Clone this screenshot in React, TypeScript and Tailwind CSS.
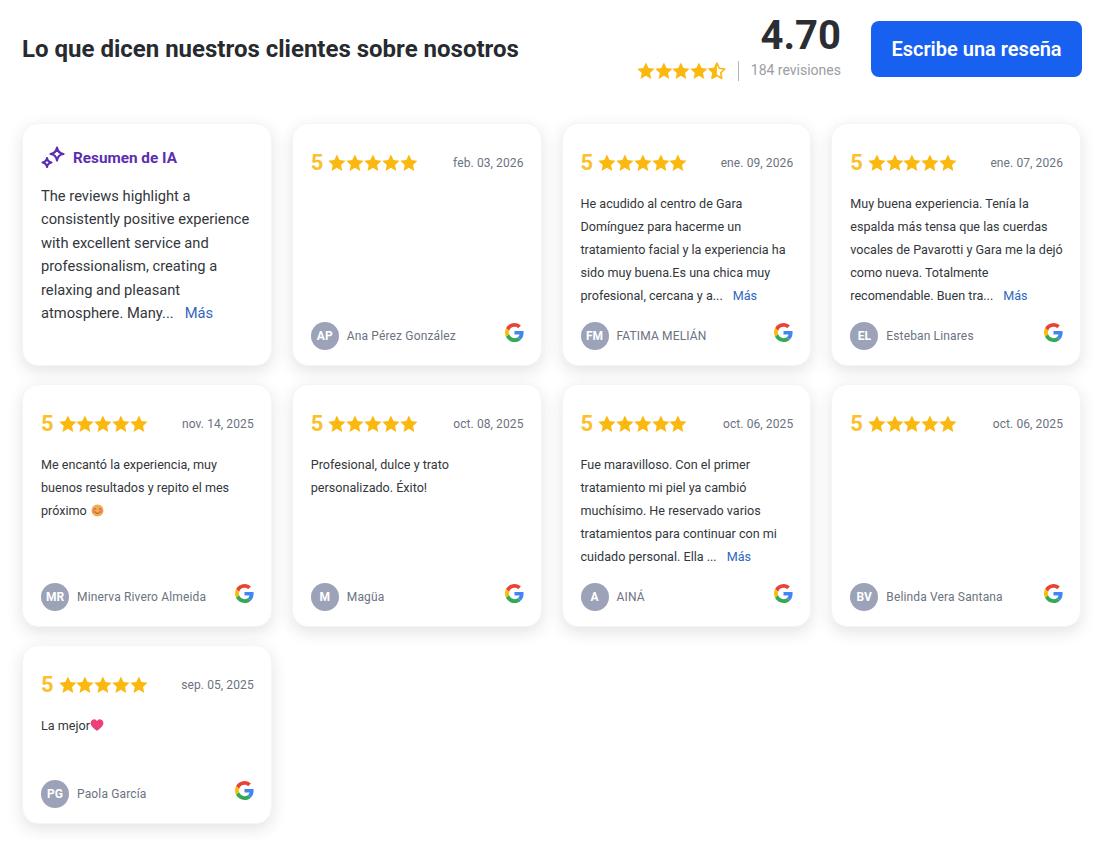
const STAR =
  'M12 1.6l3.2 6.9 7.5.9-5.6 5.1 1.5 7.4L12 18.1l-6.6 3.8 1.5-7.4-5.6-5.1 7.5-.9z'

const Star = () => (
  <svg viewBox="1 1 22 22" className="w-[17.8px] h-[17.8px] shrink-0" fill="#fbb80f">
    <path d={STAR} />
  </svg>
)

const HalfStar = () => (
  <svg viewBox="0 0 24 24" className="w-[17.8px] h-[17.8px] shrink-0">
    <path d="M12 1.6v16.5l-6.6 3.8 1.5-7.4-5.6-5.1 7.5-.9z" fill="#fbb80f" />
    <path d={STAR} fill="none" stroke="#fbb80f" strokeWidth="2.2" strokeLinejoin="round" />
  </svg>
)

const GoogleIcon = () => (
  <svg viewBox="0 0 48 48" className="w-[19px] h-[19px] shrink-0">
    <path
      fill="#EA4335"
      d="M24 9.5c3.5 0 6.7 1.2 9.2 3.6l6.9-6.9C35.9 2.4 30.5 0 24 0 14.6 0 6.5 5.4 2.6 13.2l8 6.2C12.4 13.7 17.7 9.5 24 9.5z"
    />
    <path
      fill="#4285F4"
      d="M47 24.5c0-1.6-.1-3.100-.4-4.500H24v9h12.900c-.6 3-2.200 5.500-4.700 7.200l7.700 6c4.500-4.200 7.100-10.300 7.100-17.700z"
    />
    <path
      fill="#FBBC05"
      d="M10.500 28.600c-.5-1.400-.8-3-.8-4.600s.3-3.200.8-4.600l-8-6.200C.9 16.500 0 20.100 0 24s.9 7.500 2.600 10.800l7.900-6.200z"
    />
    <path
      fill="#34A853"
      d="M24 48c6.500 0 11.900-2.100 15.900-5.800l-7.700-6c-2.200 1.500-5 2.300-8.200 2.300-6.300 0-11.600-4.200-13.500-9.900l-8 6.200C6.500 42.600 14.600 48 24 48z"
    />
  </svg>
)

const Sparkles = () => (
  <svg viewBox="0 0 24 24" className="w-[24px] h-[24px] shrink-0" fill="none" stroke="#5b2eb0" strokeWidth="2.1" strokeLinejoin="round">
    <path d="M16 1.500c.5 3.600 2.900 6 6.500 6.500-3.600.5-6 2.900-6.500 6.500-.5-3.600-2.900-6-6.500-6.500 3.600-.5 6-2.900 6.500-6.500z" />
    <path d="M6 12c.4 2.400 2.100 4.100 4.500 4.500-2.400.4-4.100 2.100-4.500 4.500-.4-2.400-2.100-4.100-4.500-4.500 2.400-.4 4.100-2.100 4.500-4.500z" />
  </svg>
)

const SmileEmoji = () => (
  <svg viewBox="0 0 24 24" className="inline-block w-[13px] h-[13px] align-[-2px] ml-[1px]">
    <circle cx="12" cy="12" r="11" fill="#f6a94f" />
    <circle cx="5.500" cy="14" r="3" fill="#ef7f5f" />
    <circle cx="18.500" cy="14" r="3" fill="#ef7f5f" />
    <path d="M5 10c1-2 3-2 4 0M15 10c1-2 3-2 4 0" fill="none" stroke="#7a4a20" strokeWidth="1.600" />
    <path d="M8 15c2 3 6 3 8 0" fill="none" stroke="#7a4a20" strokeWidth="1.800" />
  </svg>
)

const HeartEmoji = () => (
  <svg viewBox="0 0 24 24" className="inline-block w-[14px] h-[14px] align-[-2px]">
    <path d="M12 22C4 16 1 12 1 8a6 6 0 0 1 11-3 6 6 0 0 1 11 3c0 4-3 8-11 14z" fill="#ee3f78" />
  </svg>
)

type Review = {
  date: string
  initials: string
  name: string
  text?: React.ReactNode
  more?: boolean
}

const reviews: Review[] = [
  { date: 'feb. 03, 2026', initials: 'AP', name: 'Ana Pérez González' },
  {
    date: 'ene. 09, 2026',
    initials: 'FM',
    name: 'FATIMA MELIÁN',
    text: 'He acudido al centro de Gara Domínguez para hacerme un tratamiento facial y la experiencia ha sido muy buena.Es una chica muy profesional, cercana y a...',
    more: true,
  },
  {
    date: 'ene. 07, 2026',
    initials: 'EL',
    name: 'Esteban Linares',
    text: 'Muy buena experiencia. Tenía la espalda más tensa que las cuerdas vocales de Pavarotti y Gara me la dejó como nueva. Totalmente recomendable. Buen tra...',
    more: true,
  },
  {
    date: 'nov. 14, 2025',
    initials: 'MR',
    name: 'Minerva Rivero Almeida',
    text: (
      <>
        Me encantó la experiencia, muy buenos resultados y repito el mes próximo <SmileEmoji />
      </>
    ),
  },
  {
    date: 'oct. 08, 2025',
    initials: 'M',
    name: 'Magüa',
    text: 'Profesional, dulce y trato personalizado. Éxito!',
  },
  {
    date: 'oct. 06, 2025',
    initials: 'A',
    name: 'AINÁ',
    text: 'Fue maravilloso. Con el primer tratamiento mi piel ya cambió muchísimo. He reservado varios tratamientos para continuar con mi cuidado personal. Ella ...',
    more: true,
  },
  { date: 'oct. 06, 2025', initials: 'BV', name: 'Belinda Vera Santana' },
  {
    date: 'sep. 05, 2025',
    initials: 'PG',
    name: 'Paola García',
    text: (
      <>
        La mejor
        <HeartEmoji />
      </>
    ),
  },
]

const cardClass =
  'bg-white rounded-[16px] shadow-[0_5px_16px_rgba(30,41,59,0.13)] border border-[#f5f5f6]'

const ReviewCard = ({ review }: { review: Review }) => (
  <div className={`${cardClass} flex flex-col pl-[18px] pr-[17px] pt-[25px] pb-[15px]`}>
    <div className="flex items-center h-[28px]">
      <span className="text-[22px] font-bold text-[#fbc02d] mr-[5px] leading-none">5</span>
      <div className="flex">
        <Star />
        <Star />
        <Star />
        <Star />
        <Star />
      </div>
      <span className="ml-auto text-[12px] text-[#6b7280] tracking-[0.1px]">{review.date}</span>
    </div>
    <div className="flex-1 min-h-[51px] mt-[15px] mb-[15px] text-[12.6px] leading-[23px] text-[#33373c]">
      {review.text}
      {review.more && <span className="ml-[10px] text-[#2f66bf]">Más</span>}
    </div>
    <div className="flex items-center">
      <div className="w-[28px] h-[28px] rounded-full bg-[#9ca3b8] text-white text-[12px] font-bold flex items-center justify-center">
        {review.initials}
      </div>
      <span className="ml-[8px] text-[12px] text-[#6b7280] tracking-[0.15px]">{review.name}</span>
      <div className="ml-auto -mt-[7px]">
        <GoogleIcon />
      </div>
    </div>
  </div>
)

const SummaryCard = () => (
  <div className={`${cardClass} px-[18px] pt-[21px] pb-[16px]`}>
    <div className="flex items-center gap-[8px] h-[26px]">
      <Sparkles />
      <span className="text-[15.3px] font-bold text-[#5b2eb0]">Resumen de IA</span>
    </div>
    <p className="mt-[14px] text-[14.7px] leading-[23.4px] text-[#33373c]">
      The reviews highlight a consistently positive experience with excellent service and
      professionalism, creating a relaxing and pleasant atmosphere. Many...
      <span className="ml-[11px] text-[#2f66bf]">Más</span>
    </p>
  </div>
)

const App = () => {
  return (
    <div
      className="min-h-[841px] bg-white pl-[22px] pr-[21px] pt-[14px] text-[#212529]"
      style={{ fontFamily: 'Roboto, "Liberation Sans", sans-serif' }}
    >
      <div className="flex items-center h-[70px] mb-[39px]">
        <h1 className="text-[24px] font-bold text-[#272b2f] leading-none">
          Lo que dicen nuestros clientes sobre nosotros
        </h1>
        <div className="ml-auto flex flex-col items-end -mt-[2px]">
          <span className="text-[40px] font-bold leading-[42px] text-[#2a2e33]">4.70</span>
          <div className="flex items-center mt-[3px]">
            <div className="flex">
              <Star />
              <Star />
              <Star />
              <Star />
              <HalfStar />
            </div>
            <div className="w-px h-[20px] bg-[#b5b5b5] mx-[12px]" />
            <span className="text-[14px] text-[#9a9ea4]">184 revisiones</span>
          </div>
        </div>
        <button className="ml-[30px] w-[211px] h-[56px] rounded-[8px] bg-[#1860ef] text-white text-[20px] font-semibold">
          Escribe una reseña
        </button>
      </div>
      <div className="grid grid-cols-4 gap-x-[20px] gap-y-[18px] mr-[1px]">
        <SummaryCard />
        {reviews.map((r) => (
          <ReviewCard key={r.name} review={r} />
        ))}
      </div>
    </div>
  )
}

export default App
